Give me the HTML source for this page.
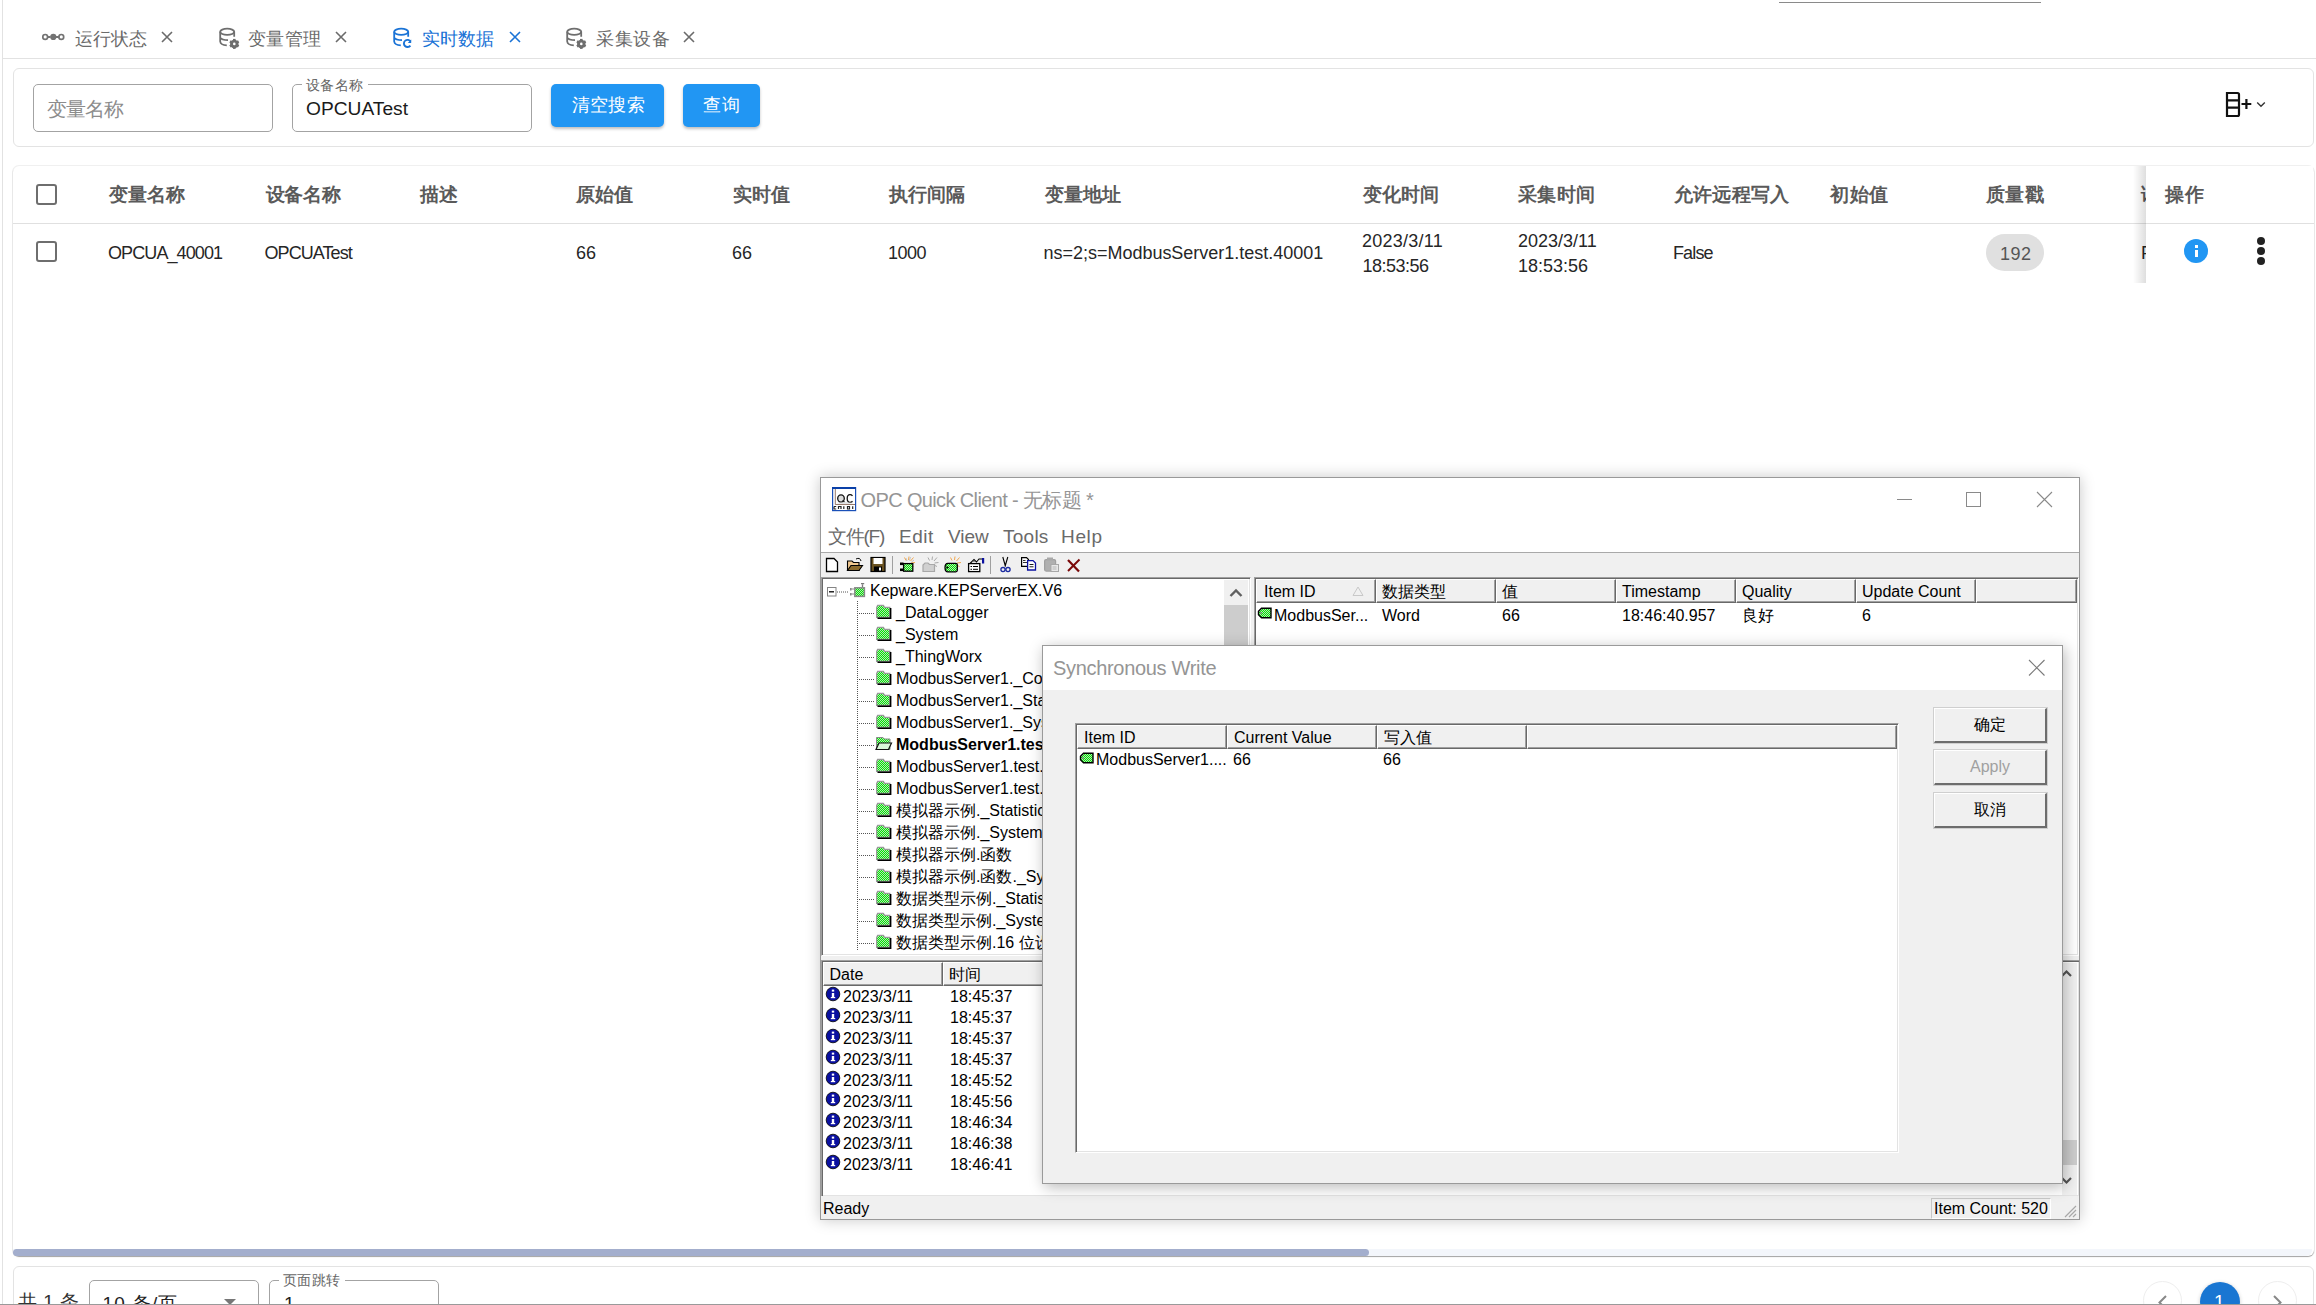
<!DOCTYPE html>
<html><head><meta charset="utf-8"><style>
*{box-sizing:border-box;margin:0;padding:0}
html,body{width:2316px;height:1305px;overflow:hidden;background:#fff;font-family:"Liberation Sans",sans-serif;color:#222}
.a{position:absolute}
.t{position:absolute;white-space:nowrap;line-height:1}
.card{position:absolute;border:1px solid #e3e3e3;border-radius:6px;background:#fff}
.inp{position:absolute;border:1px solid #a3a3a3;border-radius:5px;background:#fff}
.btn{position:absolute;background:#2196f3;border-radius:5px;box-shadow:0 2px 3px rgba(0,0,0,.25)}
.cb{position:absolute;width:21px;height:21px;border:2.5px solid #6e6e6e;border-radius:3px}
.sunk{position:absolute;border-top:1px solid #a0a0a0;border-left:1px solid #a0a0a0;border-right:1px solid #fff;border-bottom:1px solid #fff;box-shadow:inset 1px 1px 0 #696969,inset -1px -1px 0 #e3e3e3;background:#fff;overflow:hidden}
.hd{position:absolute;height:24px;background:#f0f0f0;border-top:1px solid #fff;border-left:1px solid #fff;border-right:1px solid #696969;border-bottom:1px solid #696969;box-shadow:inset -1px -1px 0 #a0a0a0;font-size:16px;line-height:23px;padding-left:7px;white-space:nowrap;overflow:hidden;color:#000}
.tr{position:absolute;font-size:16px;white-space:nowrap;line-height:20px;color:#000}
.wb{position:absolute;background:#f0f0f0;border-top:1px solid #fff;border-left:1px solid #fff;border-right:2px solid #6d6d6d;border-bottom:2px solid #6d6d6d;outline:1px solid #cfcfcf;font-size:16px;text-align:center;line-height:31px;color:#000}
</style></head><body>
<svg width="0" height="0" style="position:absolute"><defs><pattern id="chk" x="0" y="0" width="2" height="2" patternUnits="userSpaceOnUse"><rect width="2" height="2" fill="#00f000"/><rect width="1" height="1" fill="#b8d8b8"/><rect x="1" y="1" width="1" height="1" fill="#b8d8b8"/></pattern></defs></svg>
<div class="a" style="left:2px;top:0;width:1px;height:1305px;background:#e2e2e2"></div>
<div class="a" style="left:1779px;top:2px;width:262px;height:1px;background:#8a8a8a"></div>
<div class="a" style="left:3px;top:58px;width:2313px;height:1px;background:#e2e2e2"></div>
<svg class="a" style="left:36px;top:20px;color:#737373" width="40" height="36" viewBox="0 0 40 36"><path d="M11.4 16.9H14.6M20 16.9H23.2" stroke="currentColor" stroke-width="2"/><circle cx="9.2" cy="16.9" r="2.4" fill="none" stroke="currentColor" stroke-width="1.7"/><circle cx="17.3" cy="16.9" r="3.1" fill="currentColor"/><circle cx="25.3" cy="16.9" r="2.4" fill="none" stroke="currentColor" stroke-width="1.7"/></svg>
<div class="t" id="f51f00a11" style="left:75.00px;top:30px;font-size:18.3px;color:#6b6b6b;letter-spacing:0.000px;">运行状态</div><svg class="a" style="left:161px;top:31px" width="12" height="12" viewBox="0 0 12 12"><path d="M1 1L11 11M11 1L1 11" stroke="#6b6b6b" stroke-width="1.6"/></svg>
<svg class="a" style="left:214px;top:18px;color:#6e6e6e" width="40" height="36" viewBox="0 0 40 36"><ellipse cx="13.2" cy="13.8" rx="7" ry="3.1" fill="none" stroke="currentColor" stroke-width="1.8"/><path d="M6.2 13.8V23.5Q6.6 27 12.8 27.4M6.2 19.6Q7.5 22 14.2 22.2M20.2 13.8V18.8" fill="none" stroke="currentColor" stroke-width="1.8"/><rect x="14" y="19" width="12" height="13" fill="#fff"/><g transform="translate(20.3,25.9)"><circle r="3.1" fill="none" stroke="currentColor" stroke-width="2.3"/><g stroke="currentColor" stroke-width="2.6"><line x1="0" y1="-5" x2="0" y2="5"/><line x1="-4.33" y1="-2.5" x2="4.33" y2="2.5"/><line x1="-4.33" y1="2.5" x2="4.33" y2="-2.5"/></g><circle r="1.3" fill="#fff"/></g></svg>
<div class="t" id="f6b7b602b" style="left:247.50px;top:30px;font-size:18.3px;color:#6b6b6b;letter-spacing:0.500px;">变量管理</div><svg class="a" style="left:335px;top:31px" width="12" height="12" viewBox="0 0 12 12"><path d="M1 1L11 11M11 1L1 11" stroke="#6b6b6b" stroke-width="1.6"/></svg>
<svg class="a" style="left:388px;top:18px;color:#1a73d6" width="40" height="36" viewBox="0 0 40 36"><ellipse cx="13.2" cy="13.8" rx="7" ry="3.1" fill="none" stroke="currentColor" stroke-width="1.8"/><path d="M6.2 13.8V23.5Q6.6 27 12.8 27.4M6.2 19.6Q7.5 22 14.2 22.2M20.2 13.8V18.8" fill="none" stroke="currentColor" stroke-width="1.8"/><rect x="14" y="19" width="12" height="13" fill="#fff"/><g><path d="M22.6 23.6A3.6 3.6 0 1 0 22.4 27.6" fill="none" stroke="currentColor" stroke-width="1.9"/><path d="M23.2 21.6V25H19.8Z" fill="currentColor"/></g></svg>
<div class="t" id="fffaf90b1" style="left:421.50px;top:30px;font-size:18.3px;color:#1a73d6;letter-spacing:0.333px;">实时数据</div><svg class="a" style="left:509px;top:31px" width="12" height="12" viewBox="0 0 12 12"><path d="M1 1L11 11M11 1L1 11" stroke="#1a73d6" stroke-width="1.6"/></svg>
<svg class="a" style="left:561px;top:18px;color:#6e6e6e" width="40" height="36" viewBox="0 0 40 36"><ellipse cx="13.2" cy="13.8" rx="7" ry="3.1" fill="none" stroke="currentColor" stroke-width="1.8"/><path d="M6.2 13.8V23.5Q6.6 27 12.8 27.4M6.2 19.6Q7.5 22 14.2 22.2M20.2 13.8V18.8" fill="none" stroke="currentColor" stroke-width="1.8"/><rect x="14" y="19" width="12" height="13" fill="#fff"/><g transform="translate(20.3,25.9)"><circle r="3.1" fill="none" stroke="currentColor" stroke-width="2.3"/><g stroke="currentColor" stroke-width="2.6"><line x1="0" y1="-5" x2="0" y2="5"/><line x1="-4.33" y1="-2.5" x2="4.33" y2="2.5"/><line x1="-4.33" y1="2.5" x2="4.33" y2="-2.5"/></g><circle r="1.3" fill="#fff"/></g></svg>
<div class="t" id="f3e2c72ff" style="left:596.00px;top:30px;font-size:18.3px;color:#6b6b6b;letter-spacing:0.500px;">采集设备</div><svg class="a" style="left:683px;top:31px" width="12" height="12" viewBox="0 0 12 12"><path d="M1 1L11 11M11 1L1 11" stroke="#6b6b6b" stroke-width="1.6"/></svg>
<div class="card" style="left:13px;top:68px;width:2301px;height:79px"></div>
<div class="inp" style="left:33px;top:84px;width:240px;height:48px"></div>
<div class="t" id="fd07bd3bc" style="left:46.50px;top:100px;font-size:19.8px;color:#8c8c8c;letter-spacing:-0.667px;">变量名称</div>
<div class="inp" style="left:292px;top:84px;width:240px;height:48px"></div>
<div class="a" style="left:302px;top:80px;width:66px;height:8px;background:#fff"></div>
<div class="t" id="ffd49358a" style="left:306.00px;top:78px;font-size:14.2px;color:#666;letter-spacing:0.333px;">设备名称</div>
<div class="t" id="f6761a4d4" style="left:306.00px;top:98.5px;font-size:19.2px;color:#1a1a1a;letter-spacing:0.000px;">OPCUATest</div>
<div class="btn" style="left:551px;top:84px;width:113px;height:43px"></div>
<div class="t" id="ff7d41be9" style="left:572.00px;top:97px;font-size:17.8px;color:#fff;letter-spacing:0.167px;">清空搜索</div>
<div class="btn" style="left:683px;top:84px;width:77px;height:43px"></div>
<div class="t" id="f8b75aee8" style="left:703.00px;top:97px;font-size:17.8px;color:#fff;letter-spacing:1.000px;">查询</div>
<svg class="a" style="left:2220px;top:88px" width="50" height="32" viewBox="0 0 50 32"><path d="M7 5H17.5Q19 5 19 6.5V26.5Q19 28 17.5 28H7ZM7 12.3H19M7 19.7H19" fill="none" stroke="#111" stroke-width="2.2"/><path d="M21.5 16H31.3M26.4 11.1V20.9" stroke="#111" stroke-width="2.2"/><path d="M37.2 14.5L41 18.2L44.8 14.5" fill="none" stroke="#333" stroke-width="1.4"/></svg>
<div class="a" style="left:13px;top:166px;width:2301px;height:1090px;border-radius:6px;background:#fff;box-shadow:0 1px 1px rgba(0,0,0,.32),0 0 0 1px #f0f0f0"></div>
<div class="a" style="left:13px;top:223px;width:2301px;height:1px;background:#e0e0e0"></div>
<div class="cb" style="left:36px;top:184px"></div>
<div class="cb" style="left:36px;top:241px"></div>
<div class="t" id="fb3925367" style="left:109.00px;top:185px;font-size:19px;color:#5a5a5a;letter-spacing:0.000px;font-weight:bold;">变量名称</div>
<div class="t" id="fdb3ccd00" style="left:265.50px;top:185px;font-size:19px;color:#5a5a5a;letter-spacing:-0.167px;font-weight:bold;">设备名称</div>
<div class="t" style="left:420px;top:185px;font-size:19px;color:#5a5a5a;font-weight:bold;">描述</div>
<div class="t" style="left:576px;top:185px;font-size:19px;color:#5a5a5a;font-weight:bold;">原始值</div>
<div class="t" id="fba79d855" style="left:733.00px;top:185px;font-size:19px;color:#5a5a5a;letter-spacing:0.000px;font-weight:bold;">实时值</div>
<div class="t" id="f3fd43fa2" style="left:889.00px;top:185px;font-size:19px;color:#5a5a5a;letter-spacing:0.000px;font-weight:bold;">执行间隔</div>
<div class="t" id="faaaa78f1" style="left:1044.50px;top:185px;font-size:19px;color:#5a5a5a;letter-spacing:0.167px;font-weight:bold;">变量地址</div>
<div class="t" id="f716cb90e" style="left:1362.50px;top:185px;font-size:19px;color:#5a5a5a;letter-spacing:0.333px;font-weight:bold;">变化时间</div>
<div class="t" id="fda2abf53" style="left:1518.00px;top:185px;font-size:19px;color:#5a5a5a;letter-spacing:0.333px;font-weight:bold;">采集时间</div>
<div class="t" id="f3013abc5" style="left:1674.00px;top:185px;font-size:19px;color:#5a5a5a;letter-spacing:0.200px;font-weight:bold;">允许远程写入</div>
<div class="t" id="f7b46b3dd" style="left:1830.00px;top:185px;font-size:19px;color:#5a5a5a;letter-spacing:0.500px;font-weight:bold;">初始值</div>
<div class="t" id="faf9fb6f0" style="left:1986.00px;top:185px;font-size:19px;color:#5a5a5a;letter-spacing:0.250px;font-weight:bold;">质量戳</div>
<div class="t" style="left:2141px;top:185px;font-size:19px;color:#5a5a5a;font-weight:bold;">读写</div>
<div class="t" id="ff2eebaec" style="left:108.00px;top:244px;font-size:18px;color:#262626;letter-spacing:-0.900px;">OPCUA_40001</div>
<div class="t" id="f6a72c01b" style="left:264.50px;top:244px;font-size:18px;color:#262626;letter-spacing:-0.937px;">OPCUATest</div>
<div class="t" style="left:576px;top:244px;font-size:18px;color:#262626;">66</div>
<div class="t" id="fa1319cec" style="left:732.00px;top:244px;font-size:18px;color:#262626;letter-spacing:0.000px;">66</div>
<div class="t" id="fbf91984a" style="left:888.00px;top:244px;font-size:18px;color:#262626;letter-spacing:-0.500px;">1000</div>
<div class="t" id="f8e9fe2dd" style="left:1043.50px;top:244px;font-size:18px;color:#262626;letter-spacing:-0.017px;">ns=2;s=ModbusServer1.test.40001</div>
<div class="t" id="f1556ed16" style="left:1673.00px;top:244px;font-size:18px;color:#262626;letter-spacing:-0.875px;">False</div>
<div class="t" style="left:2141px;top:244px;font-size:18px;color:#262626;">False</div>
<div class="t" id="faf533c6e" style="left:1362.00px;top:232px;font-size:18px;color:#262626;letter-spacing:0.250px;">2023/3/11</div>
<div class="t" id="f26721164" style="left:1362.50px;top:257px;font-size:18px;color:#262626;letter-spacing:-0.500px;">18:53:56</div>
<div class="t" style="left:1518px;top:232px;font-size:18px;color:#262626;">2023/3/11</div>
<div class="t" style="left:1518px;top:257px;font-size:18px;color:#262626;">18:53:56</div>
<div class="a" style="left:1986px;top:234px;width:58px;height:37px;border-radius:19px;background:#e0e0e0"></div>
<div class="t" id="fcc66a5ca" style="left:2000.00px;top:245px;font-size:18px;color:#555;letter-spacing:0.500px;">192</div>
<div class="a" style="left:2133px;top:166px;width:13px;height:117px;background:linear-gradient(to right,rgba(0,0,0,0),rgba(0,0,0,.13))"></div>
<div class="a" style="left:2146px;top:166px;width:167px;height:117px;background:#fff"></div>
<div class="a" style="left:2146px;top:223px;width:167px;height:1px;background:#e0e0e0"></div>
<div class="t" id="f8f41e3f4" style="left:2165.00px;top:185px;font-size:19px;color:#5a5a5a;letter-spacing:1.000px;font-weight:bold;">操作</div>
<div class="a" style="left:2184px;top:239px;width:24px;height:24px;border-radius:12px;background:#2196f3"></div>
<div class="a" style="left:2194.5px;top:245px;width:3px;height:3px;background:#fff"></div><div class="a" style="left:2194.5px;top:250px;width:3px;height:7px;background:#fff"></div>
<div class="a" style="left:2256.5px;top:237px;width:8px;height:8px;border-radius:4px;background:#222"></div>
<div class="a" style="left:2256.5px;top:247px;width:8px;height:8px;border-radius:4px;background:#222"></div>
<div class="a" style="left:2256.5px;top:257px;width:8px;height:8px;border-radius:4px;background:#222"></div>
<div class="a" style="left:13px;top:1249px;width:2299px;height:7px;background:#f3f6fb;border-radius:0 0 6px 6px"></div>
<div class="a" style="left:13px;top:1249px;width:1356px;height:7px;background:#a3aecd;border-radius:4px"></div>
<div class="card" style="left:13px;top:1266px;width:2301px;height:60px"></div>
<div class="t" id="ff7a40d5b" style="left:17.80px;top:1292px;font-size:19px;color:#333;letter-spacing:0.550px;">共 1 条</div>
<div class="inp" style="left:89px;top:1280px;width:170px;height:48px"></div>
<div class="t" id="f0026bfa7" style="left:102.60px;top:1294px;font-size:19px;color:#222;letter-spacing:1.000px;">10 条/页</div>
<div class="a" style="left:224px;top:1299px;width:0;height:0;border-left:6px solid transparent;border-right:6px solid transparent;border-top:6px solid #777"></div>
<div class="inp" style="left:269px;top:1280px;width:170px;height:48px"></div>
<div class="a" style="left:279px;top:1276px;width:66px;height:8px;background:#fff"></div>
<div class="t" id="f2ea69368" style="left:283.00px;top:1273px;font-size:14.2px;color:#666;letter-spacing:0.333px;">页面跳转</div>
<div class="t" style="left:284px;top:1294px;font-size:19px;color:#222;">1</div>
<div class="a" style="left:2143px;top:1281px;width:39px;height:39px;border-radius:20px;border:1px solid #eee"></div>
<div class="a" style="left:2258px;top:1281px;width:39px;height:39px;border-radius:20px;border:1px solid #eee"></div>
<svg class="a" style="left:2150px;top:1290px" width="140" height="16" viewBox="0 0 140 16"><path d="M16 6L9.5 12.5L16 19" fill="none" stroke="#888" stroke-width="2"/><path d="M124 6L130.5 12.5L124 19" fill="none" stroke="#888" stroke-width="2"/></svg>
<div class="a" style="left:2200px;top:1282px;width:40px;height:40px;border-radius:20px;background:#1976d2;box-shadow:0 1px 4px rgba(0,0,0,.2)"></div>
<div class="t" style="left:2214px;top:1292px;font-size:19px;color:#fff;">1</div>
<div class="a" style="left:0;top:1304px;width:2316px;height:1px;background:#9a9a9a"></div>
<div class="a" style="left:820px;top:477px;width:1260px;height:743px;background:#f0f0f0;border:1px solid #999;box-shadow:0 0 14px rgba(0,0,0,.22)"></div>
<div class="a" style="left:821px;top:478px;width:1258px;height:74px;background:#fff"></div>
<svg class="a" style="left:828px;top:484px" width="32" height="30" viewBox="0 0 32 30"><rect x="4.6" y="3.6" width="23" height="23" fill="#fff" stroke="#1a50b8" stroke-width="1.2"/><rect x="4" y="3" width="24" height="2" fill="#0a40a8"/><path d="M7.3 5V20.5H27" fill="none" stroke="#8a6a5a" stroke-width="0.9"/><ellipse cx="13" cy="14.5" rx="3.3" ry="3.6" fill="#ddd" stroke="#111" stroke-width="1.3"/><path d="M14.5 16.5L16.5 18" stroke="#111" stroke-width="1.3"/><path d="M24.5 11.8Q23.5 10.6 22 10.6Q19.2 10.6 19.2 14.5Q19.2 18.3 22 18.3Q23.5 18.3 24.5 17.2" fill="none" stroke="#111" stroke-width="1.3"/><ellipse cx="17" cy="19" rx="8" ry="1.2" fill="#ccc" opacity=".5"/><path d="M6 22.5H8.2M6 22.5V25H8.2M10.5 25V22.5H13V25M15.8 22.3V25M19.5 22.5H21.5V25H19.5ZM24.7 22.3V25" fill="none" stroke="#222" stroke-width="1.2"/></svg>
<div class="t" id="fd7d72317" style="left:860.50px;top:490px;font-size:20px;color:#959595;letter-spacing:-0.630px;line-height:20px;">OPC Quick Client - 无标题 *</div>
<div class="a" style="left:1897px;top:499px;width:15px;height:1px;background:#8a8a8a"></div>
<div class="a" style="left:1966px;top:492px;width:15px;height:15px;border:1.3px solid #8a8a8a"></div>
<svg class="a" style="left:2036px;top:491px" width="18" height="18" viewBox="0 0 18 18"><path d="M1 1L16 16M16 1L1 16" stroke="#8a8a8a" stroke-width="1.1"/></svg>
<div class="t" id="ff7b0dc3b" style="left:828.00px;top:527px;font-size:19px;color:#6a6a6a;letter-spacing:-1.250px;line-height:20px;">文件(F)</div>
<div class="t" id="f60baa44b" style="left:899.00px;top:527px;font-size:19px;color:#6a6a6a;letter-spacing:0.500px;line-height:20px;">Edit</div>
<div class="t" id="fb2c8da36" style="left:948.00px;top:527px;font-size:19px;color:#6a6a6a;letter-spacing:0.000px;line-height:20px;">View</div>
<div class="t" id="f1a1534ac" style="left:1003.00px;top:527px;font-size:19px;color:#6a6a6a;letter-spacing:0.250px;line-height:20px;">Tools</div>
<div class="t" id="ff1d57240" style="left:1061.00px;top:527px;font-size:19px;color:#6a6a6a;letter-spacing:0.667px;line-height:20px;">Help</div>
<div class="a" style="left:821px;top:552px;width:1258px;height:1px;background:#a9a9a9"></div>
<svg class="a" style="left:0;top:0" width="1100" height="580" viewBox="0 0 1100 580"><path d="M826.5 558.5H834L837.5 562V571.5H826.5Z" fill="#fff" stroke="#000" stroke-width="1.3"/><path d="M847.5 561H852L853.5 562.5H859V570.5H847.5Z" fill="#f0c890" stroke="#000" stroke-width="1.1"/><path d="M847.5 570.5L851 565.5H862.5L859 570.5Z" fill="#8b6a2c" stroke="#000" stroke-width="1.1"/><path d="M856 559Q860 557 861 561" fill="none" stroke="#000" stroke-width="1"/><rect x="871" y="557.5" width="14" height="14" fill="#6b5320" stroke="#000" stroke-width="1.2"/><rect x="873.5" y="558" width="9" height="6" fill="#fff"/><rect x="874" y="566.5" width="8" height="5" fill="#000"/><rect x="879" y="567.5" width="2" height="3" fill="#fff"/><rect x="892" y="556" width="1" height="18" fill="#a0a0a0"/><path d="M906 560.5L904.5 557.5M908.5 560L909 556.5M910.5 561L913.5 557.5M911 563L915 562.5M910.5 565L913.5 566.5" stroke="#f0a040" stroke-width="0.9"/><path d="M907 561L906 558M909.5 560.5L910.5 557M911.5 562L914 560" stroke="#a8a8a8" stroke-width="0.6"/><rect x="903.6" y="563.6" width="9.2" height="7.6" fill="url(#chk)" stroke="#000" stroke-width="1.3"/><rect x="900" y="562.5" width="3.5" height="2.6" fill="#000"/><rect x="900" y="568.5" width="3.5" height="2.6" fill="#000"/><path d="M929.5 560.5L928 557.5M932 560L932.5 556.5M934 561L937 557.5M934.5 563L938.5 562.5M934 565L937 566.5" stroke="#a0a0a0" stroke-width="0.9"/><path d="M923 571.5V565L925 563H928L929.5 564.5H934.5V571.5Z" fill="#d0d0d0" stroke="#a8a8a8" stroke-width="1.2"/><path d="M952 560.5L950.5 557.5M954.5 560L955 556.5M956.5 561L959.5 557.5M957 563L961 562.5M956.5 565L959.5 566.5" stroke="#f0a040" stroke-width="0.9"/><path d="M948 563.3H955.8Q957.3 563.3 957.3 564.8V570.3Q957.3 571.8 955.8 571.8H948Q945 571.8 945 567.5Q945 563.3 948 563.3Z" fill="url(#chk)" stroke="#000" stroke-width="1.3"/><path d="M946.5 566L949 567.5L946.5 569Z" fill="#000"/><rect x="968.6" y="563.6" width="11.2" height="8" fill="#fff" stroke="#000" stroke-width="1.3"/><path d="M970.5 566.5H972M973 566.5H978M970.5 569.3H972M973 569.3H978" stroke="#000" stroke-width="1"/><path d="M970 563.5L974 559.5L976.5 562L979 559H982" fill="none" stroke="#000" stroke-width="1.1"/><path d="M972 562L974 560.5L975.5 562" fill="#888"/><rect x="982" y="558" width="2.2" height="5.5" fill="#0a10a0"/><rect x="990" y="556" width="1" height="18" fill="#a0a0a0"/><path d="M1002.8 557L1005.5 566.5M1007.8 557L1005 566.5" stroke="#000" stroke-width="1.1"/><circle cx="1003" cy="569.6" r="2.1" fill="none" stroke="#1a2aa0" stroke-width="1.3"/><circle cx="1008" cy="569.6" r="2.1" fill="none" stroke="#1a2aa0" stroke-width="1.3"/><path d="M1021.6 557.6H1026.5L1028.5 559.6V566.4H1021.6Z" fill="#fff" stroke="#000" stroke-width="1.2"/><path d="M1023 560.5H1025.5M1023 562.5H1027" stroke="#000" stroke-width="0.8"/><path d="M1027.6 560.6H1033L1035.5 563V570H1027.6Z" fill="#fff" stroke="#0a10a0" stroke-width="1.3"/><path d="M1029.5 564.5H1033.5M1029.5 566.8H1033.5" stroke="#000" stroke-width="0.9"/><rect x="1044.6" y="559.6" width="11" height="11.5" rx="1.5" fill="#b0b0b0" stroke="#a0a0a0" stroke-width="1.2"/><rect x="1047" y="557.5" width="6" height="2.5" fill="#a8a8a8"/><rect x="1051" y="564.5" width="7.5" height="7" fill="#e8e8e8" stroke="#a8a8a8" stroke-width="1"/><path d="M1052.5 567H1056.5M1052.5 569H1056.5" stroke="#aaa" stroke-width="0.8"/><path d="M1068 560L1079 571.5" stroke="#7a0808" stroke-width="2.2"/><path d="M1079.5 559.5L1068 571" stroke="#7a0808" stroke-width="1.9"/></svg>
<div class="a" style="left:821px;top:576px;width:1258px;height:2px;background:#f0f0f0"></div>
<div class="sunk" style="left:821px;top:577px;width:430px;height:379px"></div>
<div class="a" style="left:1224px;top:580px;width:24px;height:375px;background:#f0f0f0"></div>
<div class="a" style="left:1224px;top:605px;width:24px;height:350px;background:#cdcdcd"></div>
<svg class="a" style="left:1228px;top:585px" width="16" height="16" viewBox="0 0 16 16"><path d="M2.5 11L8 5.5L13.5 11" fill="none" stroke="#606060" stroke-width="2.4"/></svg>
<svg class="a" style="left:0;top:0" width="1230" height="960" viewBox="0 0 1230 960"><rect x="827.5" y="587.5" width="8.5" height="8.5" fill="#fff" stroke="#848484" stroke-width="1"/><path d="M829 591.8H834" stroke="#000" stroke-width="1.3"/><path d="M837 592H849" stroke="#555" stroke-width="1" stroke-dasharray="1 1"/><rect x="854.8" y="587.8" width="9.6" height="8.6" fill="url(#chk)" stroke="#8a8a8a" stroke-width="1.5"/><path d="M862.5 587V584.5M861 583.7H864.2" stroke="#7a7a7a" stroke-width="1.3"/><path d="M850 589H854M850 594H854" stroke="#8a8a8a" stroke-width="1.2"/><rect x="850" y="588" width="1.5" height="2.5" fill="#8a8a8a"/><rect x="850" y="593" width="1.5" height="2.5" fill="#8a8a8a"/><path d="M857.5 601V951" stroke="#555" stroke-width="1" stroke-dasharray="1 1"/><path d="M859 613.5H875" stroke="#555" stroke-width="1" stroke-dasharray="1 1"/><path d="M876.6 617.4V607.6L877.6 605.4H883.4L884.6 607.4H889.8V617.4Z" fill="url(#chk)" stroke="#9a9a9a" stroke-width="1.2"/><path d="M877.5 618.2H890.6V608" fill="none" stroke="#000" stroke-width="1.6"/><path d="M859 635.5H875" stroke="#555" stroke-width="1" stroke-dasharray="1 1"/><path d="M876.6 639.4V629.6L877.6 627.4H883.4L884.6 629.4H889.8V639.4Z" fill="url(#chk)" stroke="#9a9a9a" stroke-width="1.2"/><path d="M877.5 640.2H890.6V630" fill="none" stroke="#000" stroke-width="1.6"/><path d="M859 657.5H875" stroke="#555" stroke-width="1" stroke-dasharray="1 1"/><path d="M876.6 661.4V651.6L877.6 649.4H883.4L884.6 651.4H889.8V661.4Z" fill="url(#chk)" stroke="#9a9a9a" stroke-width="1.2"/><path d="M877.5 662.2H890.6V652" fill="none" stroke="#000" stroke-width="1.6"/><path d="M859 679.5H875" stroke="#555" stroke-width="1" stroke-dasharray="1 1"/><path d="M876.6 683.4V673.6L877.6 671.4H883.4L884.6 673.4H889.8V683.4Z" fill="url(#chk)" stroke="#9a9a9a" stroke-width="1.2"/><path d="M877.5 684.2H890.6V674" fill="none" stroke="#000" stroke-width="1.6"/><path d="M859 701.5H875" stroke="#555" stroke-width="1" stroke-dasharray="1 1"/><path d="M876.6 705.4V695.6L877.6 693.4H883.4L884.6 695.4H889.8V705.4Z" fill="url(#chk)" stroke="#9a9a9a" stroke-width="1.2"/><path d="M877.5 706.2H890.6V696" fill="none" stroke="#000" stroke-width="1.6"/><path d="M859 723.5H875" stroke="#555" stroke-width="1" stroke-dasharray="1 1"/><path d="M876.6 727.4V717.6L877.6 715.4H883.4L884.6 717.4H889.8V727.4Z" fill="url(#chk)" stroke="#9a9a9a" stroke-width="1.2"/><path d="M877.5 728.2H890.6V718" fill="none" stroke="#000" stroke-width="1.6"/><path d="M859 745.5H875" stroke="#555" stroke-width="1" stroke-dasharray="1 1"/><path d="M876.5 737.5H883L884.5 739H890V749.5H876.5Z" fill="url(#chk)" stroke="#8a8a8a" stroke-width="1"/><path d="M876 749.5L879 743H891.5L888.5 749.5Z" fill="#d8f8d8" stroke="#111" stroke-width="1.2"/><path d="M859 767.5H875" stroke="#555" stroke-width="1" stroke-dasharray="1 1"/><path d="M876.6 771.4V761.6L877.6 759.4H883.4L884.6 761.4H889.8V771.4Z" fill="url(#chk)" stroke="#9a9a9a" stroke-width="1.2"/><path d="M877.5 772.2H890.6V762" fill="none" stroke="#000" stroke-width="1.6"/><path d="M859 789.5H875" stroke="#555" stroke-width="1" stroke-dasharray="1 1"/><path d="M876.6 793.4V783.6L877.6 781.4H883.4L884.6 783.4H889.8V793.4Z" fill="url(#chk)" stroke="#9a9a9a" stroke-width="1.2"/><path d="M877.5 794.2H890.6V784" fill="none" stroke="#000" stroke-width="1.6"/><path d="M859 811.5H875" stroke="#555" stroke-width="1" stroke-dasharray="1 1"/><path d="M876.6 815.4V805.6L877.6 803.4H883.4L884.6 805.4H889.8V815.4Z" fill="url(#chk)" stroke="#9a9a9a" stroke-width="1.2"/><path d="M877.5 816.2H890.6V806" fill="none" stroke="#000" stroke-width="1.6"/><path d="M859 833.5H875" stroke="#555" stroke-width="1" stroke-dasharray="1 1"/><path d="M876.6 837.4V827.6L877.6 825.4H883.4L884.6 827.4H889.8V837.4Z" fill="url(#chk)" stroke="#9a9a9a" stroke-width="1.2"/><path d="M877.5 838.2H890.6V828" fill="none" stroke="#000" stroke-width="1.6"/><path d="M859 855.5H875" stroke="#555" stroke-width="1" stroke-dasharray="1 1"/><path d="M876.6 859.4V849.6L877.6 847.4H883.4L884.6 849.4H889.8V859.4Z" fill="url(#chk)" stroke="#9a9a9a" stroke-width="1.2"/><path d="M877.5 860.2H890.6V850" fill="none" stroke="#000" stroke-width="1.6"/><path d="M859 877.5H875" stroke="#555" stroke-width="1" stroke-dasharray="1 1"/><path d="M876.6 881.4V871.6L877.6 869.4H883.4L884.6 871.4H889.8V881.4Z" fill="url(#chk)" stroke="#9a9a9a" stroke-width="1.2"/><path d="M877.5 882.2H890.6V872" fill="none" stroke="#000" stroke-width="1.6"/><path d="M859 899.5H875" stroke="#555" stroke-width="1" stroke-dasharray="1 1"/><path d="M876.6 903.4V893.6L877.6 891.4H883.4L884.6 893.4H889.8V903.4Z" fill="url(#chk)" stroke="#9a9a9a" stroke-width="1.2"/><path d="M877.5 904.2H890.6V894" fill="none" stroke="#000" stroke-width="1.6"/><path d="M859 921.5H875" stroke="#555" stroke-width="1" stroke-dasharray="1 1"/><path d="M876.6 925.4V915.6L877.6 913.4H883.4L884.6 915.4H889.8V925.4Z" fill="url(#chk)" stroke="#9a9a9a" stroke-width="1.2"/><path d="M877.5 926.2H890.6V916" fill="none" stroke="#000" stroke-width="1.6"/><path d="M859 943.5H875" stroke="#555" stroke-width="1" stroke-dasharray="1 1"/><path d="M876.6 947.4V937.6L877.6 935.4H883.4L884.6 937.4H889.8V947.4Z" fill="url(#chk)" stroke="#9a9a9a" stroke-width="1.2"/><path d="M877.5 948.2H890.6V938" fill="none" stroke="#000" stroke-width="1.6"/></svg>
<div class="tr" style="left:870px;top:581px">Kepware.KEPServerEX.V6</div>
<div class="tr" style="left:896px;top:603px;">_DataLogger</div>
<div class="tr" style="left:896px;top:625px;">_System</div>
<div class="tr" style="left:896px;top:647px;">_ThingWorx</div>
<div class="tr" style="left:896px;top:669px;">ModbusServer1._CommunicationSerialization</div>
<div class="tr" style="left:896px;top:691px;">ModbusServer1._Statistics</div>
<div class="tr" style="left:896px;top:713px;">ModbusServer1._System</div>
<div class="tr" style="left:896px;top:735px;font-weight:bold;">ModbusServer1.test</div>
<div class="tr" style="left:896px;top:757px;">ModbusServer1.test._Statistics</div>
<div class="tr" style="left:896px;top:779px;">ModbusServer1.test._System</div>
<div class="tr" style="left:896px;top:801px;">模拟器示例._Statistics</div>
<div class="tr" style="left:896px;top:823px;">模拟器示例._System</div>
<div class="tr" style="left:896px;top:845px;">模拟器示例.函数</div>
<div class="tr" style="left:896px;top:867px;">模拟器示例.函数._System</div>
<div class="tr" style="left:896px;top:889px;">数据类型示例._Statistics</div>
<div class="tr" style="left:896px;top:911px;">数据类型示例._System</div>
<div class="tr" style="left:896px;top:933px;">数据类型示例.16 位设备</div>
<div class="sunk" style="left:1254px;top:577px;width:825px;height:379px"></div>
<div class="hd" style="left:1256px;top:579px;width:120px;padding-left:7px">Item ID</div>
<div class="hd" style="left:1376px;top:579px;width:120px;padding-left:5px">数据类型</div>
<div class="hd" style="left:1496px;top:579px;width:120px;padding-left:5px">值</div>
<div class="hd" style="left:1616px;top:579px;width:120px;padding-left:5px">Timestamp</div>
<div class="hd" style="left:1736px;top:579px;width:120px;padding-left:5px">Quality</div>
<div class="hd" style="left:1856px;top:579px;width:120px;padding-left:5px">Update Count</div>
<div class="hd" style="left:1976px;top:579px;width:101px;padding-left:5px"></div>
<svg class="a" style="left:1352px;top:585px" width="12" height="12" viewBox="0 0 12 12"><path d="M1 10.5L6 2L11 10.5Z" fill="none" stroke="#c8c8c8" stroke-width="1"/></svg>
<svg class="a" style="left:1257px;top:607px" width="16" height="12" viewBox="0 0 16 12"><path d="M4.5 1.2H14V10.8H4.5L1.5 7.8V4.2Z" fill="url(#chk)" stroke="#000" stroke-width="1.4"/><circle cx="4" cy="6" r="0.9" fill="#888"/></svg>
<div class="tr" style="left:1274px;top:606px">ModbusSer...</div>
<div class="tr" style="left:1382px;top:606px">Word</div>
<div class="tr" style="left:1502px;top:606px">66</div>
<div class="tr" style="left:1622px;top:606px">18:46:40.957</div>
<div class="tr" style="left:1742px;top:606px">良好</div>
<div class="tr" style="left:1862px;top:606px">6</div>
<div class="sunk" style="left:821px;top:960px;width:1258px;height:236px;border-right:none;border-bottom:none"></div>
<div class="hd" style="left:823px;top:962px;width:120px;height:24px;padding-left:5.5px">Date</div>
<div class="hd" style="left:943px;top:962px;width:1120px;height:24px;padding-left:5px">时间</div>
<div class="a" style="left:2062px;top:963px;width:15px;height:232px;background:#f0f0f0"></div>
<div class="a" style="left:2062px;top:1140px;width:15px;height:25px;background:#cdcdcd"></div>
<svg class="a" style="left:2058px;top:966px" width="16" height="14" viewBox="0 0 16 14"><path d="M4 10L8.5 5.5L13 10" fill="none" stroke="#555" stroke-width="2.2"/></svg>
<svg class="a" style="left:2058px;top:1174px" width="16" height="14" viewBox="0 0 16 14"><path d="M4 4L8.5 8.5L13 4" fill="none" stroke="#555" stroke-width="2.2"/></svg>
<svg class="a" style="left:825px;top:986px" width="16" height="16" viewBox="0 0 16 16"><circle cx="8" cy="8" r="6.8" fill="#0a10a0" stroke="#000" stroke-width="0.8"/><rect x="6.8" y="7" width="2.4" height="5" fill="#fff"/><rect x="6.8" y="3.6" width="2.4" height="2" fill="#fff"/><rect x="5.8" y="11" width="4.4" height="1.2" fill="#fff"/></svg>
<div class="tr" style="left:843px;top:987px">2023/3/11</div>
<div class="tr" style="left:950px;top:987px">18:45:37</div>
<svg class="a" style="left:825px;top:1007px" width="16" height="16" viewBox="0 0 16 16"><circle cx="8" cy="8" r="6.8" fill="#0a10a0" stroke="#000" stroke-width="0.8"/><rect x="6.8" y="7" width="2.4" height="5" fill="#fff"/><rect x="6.8" y="3.6" width="2.4" height="2" fill="#fff"/><rect x="5.8" y="11" width="4.4" height="1.2" fill="#fff"/></svg>
<div class="tr" style="left:843px;top:1008px">2023/3/11</div>
<div class="tr" style="left:950px;top:1008px">18:45:37</div>
<svg class="a" style="left:825px;top:1028px" width="16" height="16" viewBox="0 0 16 16"><circle cx="8" cy="8" r="6.8" fill="#0a10a0" stroke="#000" stroke-width="0.8"/><rect x="6.8" y="7" width="2.4" height="5" fill="#fff"/><rect x="6.8" y="3.6" width="2.4" height="2" fill="#fff"/><rect x="5.8" y="11" width="4.4" height="1.2" fill="#fff"/></svg>
<div class="tr" style="left:843px;top:1029px">2023/3/11</div>
<div class="tr" style="left:950px;top:1029px">18:45:37</div>
<svg class="a" style="left:825px;top:1049px" width="16" height="16" viewBox="0 0 16 16"><circle cx="8" cy="8" r="6.8" fill="#0a10a0" stroke="#000" stroke-width="0.8"/><rect x="6.8" y="7" width="2.4" height="5" fill="#fff"/><rect x="6.8" y="3.6" width="2.4" height="2" fill="#fff"/><rect x="5.8" y="11" width="4.4" height="1.2" fill="#fff"/></svg>
<div class="tr" style="left:843px;top:1050px">2023/3/11</div>
<div class="tr" style="left:950px;top:1050px">18:45:37</div>
<svg class="a" style="left:825px;top:1070px" width="16" height="16" viewBox="0 0 16 16"><circle cx="8" cy="8" r="6.8" fill="#0a10a0" stroke="#000" stroke-width="0.8"/><rect x="6.8" y="7" width="2.4" height="5" fill="#fff"/><rect x="6.8" y="3.6" width="2.4" height="2" fill="#fff"/><rect x="5.8" y="11" width="4.4" height="1.2" fill="#fff"/></svg>
<div class="tr" style="left:843px;top:1071px">2023/3/11</div>
<div class="tr" style="left:950px;top:1071px">18:45:52</div>
<svg class="a" style="left:825px;top:1091px" width="16" height="16" viewBox="0 0 16 16"><circle cx="8" cy="8" r="6.8" fill="#0a10a0" stroke="#000" stroke-width="0.8"/><rect x="6.8" y="7" width="2.4" height="5" fill="#fff"/><rect x="6.8" y="3.6" width="2.4" height="2" fill="#fff"/><rect x="5.8" y="11" width="4.4" height="1.2" fill="#fff"/></svg>
<div class="tr" style="left:843px;top:1092px">2023/3/11</div>
<div class="tr" style="left:950px;top:1092px">18:45:56</div>
<svg class="a" style="left:825px;top:1112px" width="16" height="16" viewBox="0 0 16 16"><circle cx="8" cy="8" r="6.8" fill="#0a10a0" stroke="#000" stroke-width="0.8"/><rect x="6.8" y="7" width="2.4" height="5" fill="#fff"/><rect x="6.8" y="3.6" width="2.4" height="2" fill="#fff"/><rect x="5.8" y="11" width="4.4" height="1.2" fill="#fff"/></svg>
<div class="tr" style="left:843px;top:1113px">2023/3/11</div>
<div class="tr" style="left:950px;top:1113px">18:46:34</div>
<svg class="a" style="left:825px;top:1133px" width="16" height="16" viewBox="0 0 16 16"><circle cx="8" cy="8" r="6.8" fill="#0a10a0" stroke="#000" stroke-width="0.8"/><rect x="6.8" y="7" width="2.4" height="5" fill="#fff"/><rect x="6.8" y="3.6" width="2.4" height="2" fill="#fff"/><rect x="5.8" y="11" width="4.4" height="1.2" fill="#fff"/></svg>
<div class="tr" style="left:843px;top:1134px">2023/3/11</div>
<div class="tr" style="left:950px;top:1134px">18:46:38</div>
<svg class="a" style="left:825px;top:1154px" width="16" height="16" viewBox="0 0 16 16"><circle cx="8" cy="8" r="6.8" fill="#0a10a0" stroke="#000" stroke-width="0.8"/><rect x="6.8" y="7" width="2.4" height="5" fill="#fff"/><rect x="6.8" y="3.6" width="2.4" height="2" fill="#fff"/><rect x="5.8" y="11" width="4.4" height="1.2" fill="#fff"/></svg>
<div class="tr" style="left:843px;top:1155px">2023/3/11</div>
<div class="tr" style="left:950px;top:1155px">18:46:41</div>
<div class="tr" style="left:823px;top:1199px">Ready</div>
<div class="a" style="left:1931px;top:1198px;width:120px;height:21px;border:1px solid #c8c8c8;border-right-color:#fff;border-bottom-color:#fff"></div>
<div class="tr" style="left:1934px;top:1199px">Item Count: 520</div>
<svg class="a" style="left:2062px;top:1204px" width="16" height="14" viewBox="0 0 16 14"><path d="M14 2L3 13M14 6L7 13M14 10L11 13" stroke="#a8a8a8" stroke-width="1.2"/></svg>
<div class="a" style="left:1042px;top:645px;width:1021px;height:539px;background:#f0f0f0;border:1px solid #9a9a9a;box-shadow:2px 3px 14px rgba(0,0,0,.28)"></div>
<div class="a" style="left:1043px;top:646px;width:1019px;height:44px;background:#fff"></div>
<div class="t" id="ff162b053" style="left:1053.00px;top:658px;font-size:20px;color:#959595;letter-spacing:-0.312px;line-height:20px;">Synchronous Write</div>
<svg class="a" style="left:2028px;top:659px" width="18" height="18" viewBox="0 0 18 18"><path d="M1 1L16.5 16.5M16.5 1L1 16.5" stroke="#7a7a7a" stroke-width="1.1"/></svg>
<div class="sunk" style="left:1075px;top:723px;width:824px;height:430px"></div>
<div class="hd" style="left:1077px;top:725px;width:150px;padding-left:6px">Item ID</div>
<div class="hd" style="left:1227px;top:725px;width:150px;padding-left:6px">Current Value</div>
<div class="hd" style="left:1377px;top:725px;width:150px;padding-left:6px">写入值</div>
<div class="hd" style="left:1527px;top:725px;width:370px;padding-left:6px"></div>
<svg class="a" style="left:1079px;top:752px" width="16" height="12" viewBox="0 0 16 12"><path d="M4.5 1.2H14V10.8H4.5L1.5 7.8V4.2Z" fill="url(#chk)" stroke="#000" stroke-width="1.4"/><circle cx="4" cy="6" r="0.9" fill="#888"/></svg>
<div class="tr" style="left:1096px;top:750px">ModbusServer1....</div>
<div class="tr" style="left:1233px;top:750px">66</div>
<div class="tr" style="left:1383px;top:750px">66</div>
<div class="wb" style="left:1934px;top:708px;width:113px;height:35px;color:#000">确定</div>
<div class="wb" style="left:1934px;top:750px;width:113px;height:35px;color:#a0a0a0">Apply</div>
<div class="wb" style="left:1934px;top:793px;width:113px;height:35px;color:#000">取消</div>
</body></html>
